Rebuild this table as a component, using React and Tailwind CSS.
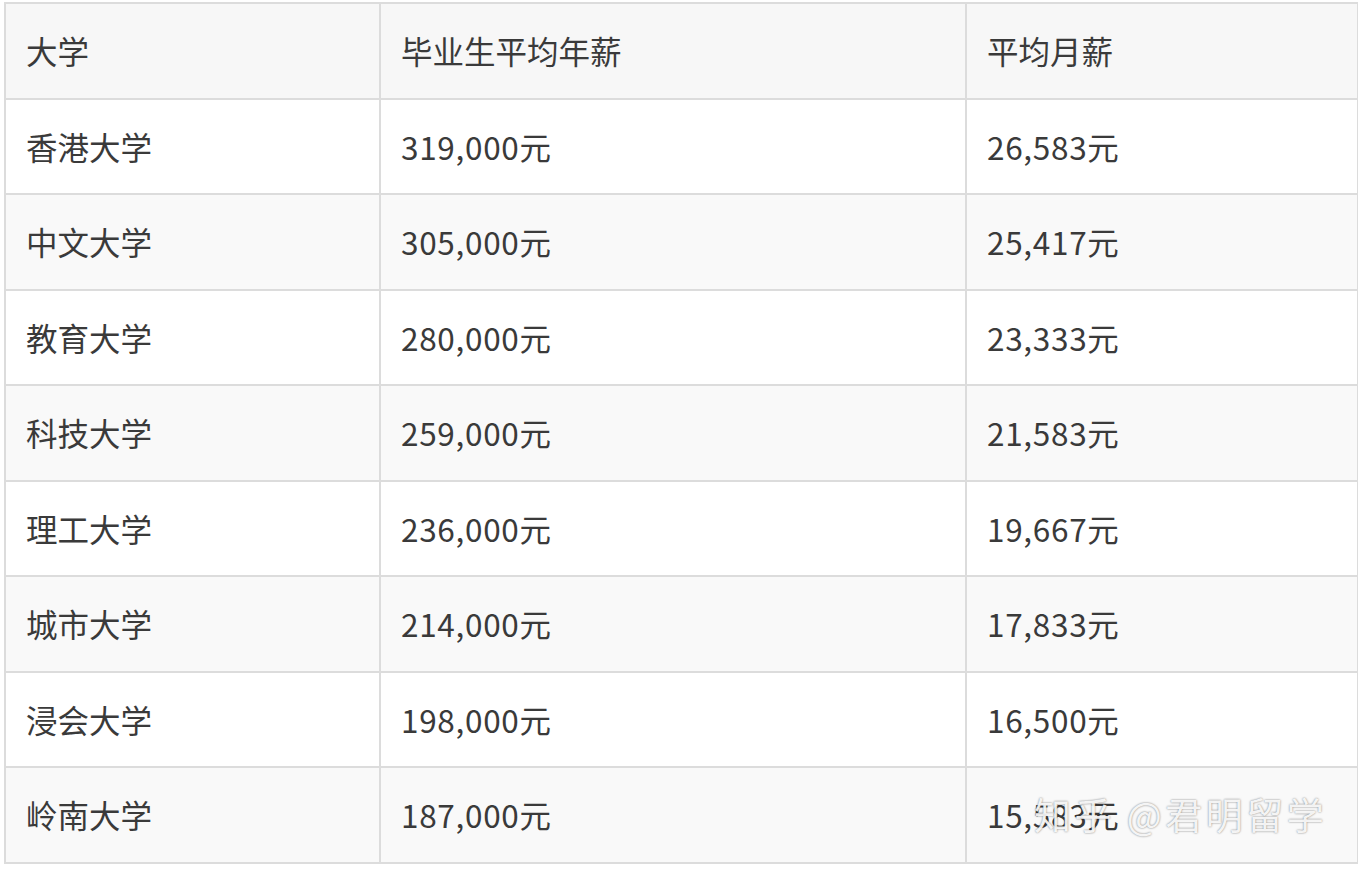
import React from 'react';

const rows = [
  ['香港大学', '319,000元', '26,583元'],
  ['中文大学', '305,000元', '25,417元'],
  ['教育大学', '280,000元', '23,333元'],
  ['科技大学', '259,000元', '21,583元'],
  ['理工大学', '236,000元', '19,667元'],
  ['城市大学', '214,000元', '17,833元'],
  ['浸会大学', '198,000元', '16,500元'],
  ['岭南大学', '187,000元', '15,583元'],
];

const cell = 'border-2 border-[#dcdcdc] pl-[20px] h-[95.5px] text-left align-middle font-normal';

export default function App() {
  return (
    <div className="w-[1358px] h-[870px] bg-white pl-[4px] pt-[2px] relative" style={{ fontFamily: '"Noto Sans CJK SC", "Noto Sans", sans-serif' }}>
      <table className="border-collapse text-[31.5px] text-[#3a3a3a] table-fixed w-[1353px]">
        <colgroup>
          <col className="w-[375px]" />
          <col className="w-[586px]" />
          <col className="w-[392px]" />
        </colgroup>
        <thead>
          <tr className="bg-[#f7f7f7]">
            <th className={cell}>大学</th>
            <th className={cell}>毕业生平均年薪</th>
            <th className={cell}>平均月薪</th>
          </tr>
        </thead>
        <tbody>
          {rows.map((r, i) => (
            <tr key={r[0]} className={i % 2 === 0 ? 'bg-white' : 'bg-[#f9f9f9]'}>
              <td className={cell}>{r[0]}</td>
              <td className={cell + ' tracking-[0.7px]'}>{r[1]}</td>
              <td className={cell + ' tracking-[0.7px]'}>{r[2]}</td>
            </tr>
          ))}
        </tbody>
      </table>
      {/* zhihu watermark */}
      <div className="absolute left-[1034px] top-[788px] text-[37px] leading-[52px] text-white/90 tracking-[3.5px] [text-shadow:0_0_2px_rgba(0,0,0,0.55)]">
        知乎 @君明留学
      </div>
    </div>
  );
}
